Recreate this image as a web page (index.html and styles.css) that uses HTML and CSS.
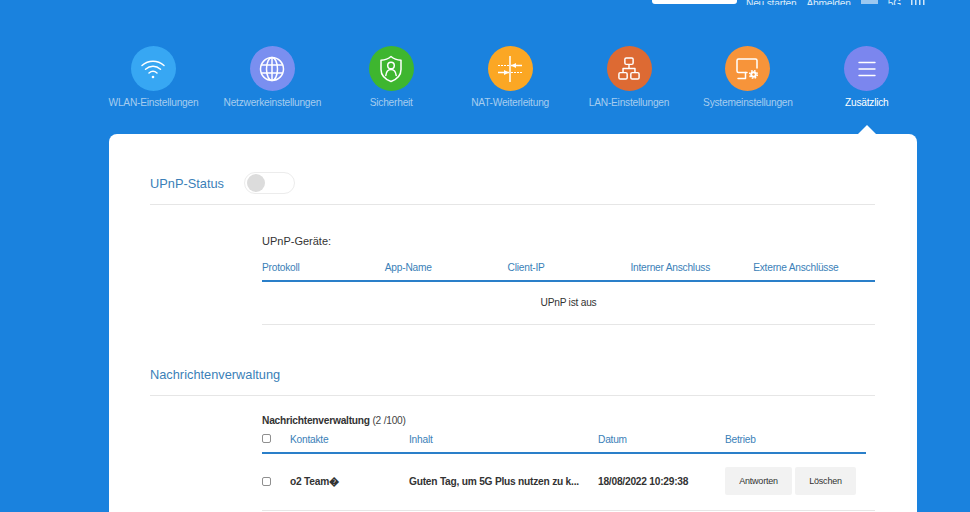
FILE: index.html
```html
<!DOCTYPE html>
<html lang="de">
<head>
    <meta charset="UTF-8">
    <meta name="viewport" content="width=device-width, initial-scale=1.0">
    <title>UPnP</title>
    <link rel="stylesheet" href="styles.css">
</head>
<body>
    <div class="topbar">
        <div class="search"></div>
        <span class="top-link">Neu starten</span>
        <span class="top-link">Abmelden</span>
        <span class="lang"></span>
        <span class="top-link net">5G</span>
        <svg class="signal" width="16" height="5" viewBox="0 0 16 5"><path d="M1 0h1.500v5H1zM5 0h1.500v5H5zM9 0h1.500v5H9zM13 0h1.500v5H13z" fill="#fff"/></svg>
    </div>

    <nav class="nav">
        <div class="nav-item">
            <div class="nav-icon c-wifi">
                <svg width="26" height="26" viewBox="0 0 26 26" fill="none" stroke="#fff" stroke-width="1.500" stroke-linecap="round"><path d="M2 9.500c6.500-5.600 15.500-5.600 22 0"/><path d="M5.500 13.200c4.500-3.800 10.500-3.800 15 0"/><path d="M9 17c2.400-2 5.600-2 8 0"/><circle cx="13" cy="21" r="1.300" fill="#fff" stroke="none"/></svg>
            </div>
            <span>WLAN-Einstellungen</span>
        </div>
        <div class="nav-item">
            <div class="nav-icon c-net">
                <svg width="26" height="26" viewBox="0 0 26 26" fill="none" stroke="#fff" stroke-width="1.500"><circle cx="13" cy="13" r="11.500"/><ellipse cx="13" cy="13" rx="5.500" ry="11.500"/><path d="M13 1.500v23M2.500 9h21M2.500 17h21"/></svg>
            </div>
            <span>Netzwerkeinstellungen</span>
        </div>
        <div class="nav-item">
            <div class="nav-icon c-sec">
                <svg width="26" height="28" viewBox="0 0 26 28" fill="none" stroke="#fff" stroke-width="1.500" stroke-linejoin="round" stroke-linecap="round"><path d="M13 1.500c2.500 2.200 6 3.500 10 3.800v9.200c0 5.500-4.200 9.800-10 12-5.800-2.200-10-6.500-10-12V5.300c4-.3 7.500-1.600 10-3.800z"/><circle cx="13" cy="10.500" r="3.300"/><path d="M7.800 20.500c.4-3.600 2.500-6 5.200-6s4.800 2.400 5.200 6"/></svg>
            </div>
            <span>Sicherheit</span>
        </div>
        <div class="nav-item">
            <div class="nav-icon c-nat">
                <svg width="26" height="28" viewBox="0 0 26 28" fill="none" stroke="#fff"><path d="M13 1v26" stroke-width="1.500"/><path d="M1 10.500h11" stroke-dasharray="2 1" stroke-width="1"/><path d="M14 10.500h11M1 17.500h11" stroke-width="1.500"/><path d="M14 17.500h11" stroke-dasharray="2 1" stroke-width="1"/><path d="M19 8l-5 2.500 5 2.500zM7 15l5 2.500L7 20z" fill="#fff" stroke="none"/></svg>
            </div>
            <span>NAT-Weiterleitung</span>
        </div>
        <div class="nav-item">
            <div class="nav-icon c-lan">
                <svg width="22" height="23" viewBox="0 0 24 25" fill="none" stroke="#fff" stroke-width="1.600" stroke-linejoin="round"><rect x="7.500" y="1" width="9" height="7" rx="1.500"/><rect x="1" y="17" width="9" height="7" rx="1.500"/><rect x="14" y="17" width="9" height="7" rx="1.500"/><path d="M12 8v4.500M5.500 17v-4.500h13V17"/></svg>
            </div>
            <span>LAN-Einstellungen</span>
        </div>
        <div class="nav-item">
            <div class="nav-icon c-sys">
                <svg width="23" height="22" viewBox="0 0 23 22" fill="none" stroke="#fff" stroke-width="1.500" stroke-linejoin="round" stroke-linecap="round"><path d="M11 14.500H2.500a1.500 1.500 0 0 1-1.500-1.500V2.500A1.500 1.500 0 0 1 2.500 1h17A1.500 1.500 0 0 1 21 2.500V10"/><path d="M9.500 14.500V20.500H2"/><circle cx="17.500" cy="16.500" r="3.800" stroke-width="1.600" stroke-dasharray="1.600 1.400" stroke-linecap="butt"/><circle cx="17.500" cy="16.500" r="3.200" fill="#fff" stroke="none"/><circle cx="17.500" cy="16.500" r="1.200" fill="#f7943a" stroke="none"/></svg>
            </div>
            <span>Systemeinstellungen</span>
        </div>
        <div class="nav-item active">
            <div class="nav-icon c-more">
                <svg width="18" height="16" viewBox="0 0 18 16" fill="none" stroke="#fff" stroke-width="1.400" stroke-linecap="round"><path d="M1 1.500h16M1 8h16M1 14.500h16"/></svg>
            </div>
            <span>Zusätzlich</span>
        </div>
    </nav>

    <main class="card">
        <div class="section-head">
            <h2>UPnP-Status</h2>
            <div class="toggle"><div class="knob"></div></div>
        </div>

        <div class="panel upnp">
            <p class="panel-title">UPnP-Geräte:</p>
            <div class="upnp-head">
                <span>Protokoll</span>
                <span>App-Name</span>
                <span>Client-IP</span>
                <span>Interner Anschluss</span>
                <span>Externe Anschlüsse</span>
            </div>
            <div class="upnp-empty">UPnP ist aus</div>
        </div>

        <div class="section-head msg-head">
            <h2>Nachrichtenverwaltung</h2>
        </div>

        <div class="panel msgs">
            <p class="msg-title"><b>Nachrichtenverwaltung</b> (2 /100)</p>
            <div class="msg-row msg-columns">
                <span class="check"></span>
                <span>Kontakte</span>
                <span>Inhalt</span>
                <span>Datum</span>
                <span>Betrieb</span>
            </div>
            <div class="msg-row msg-item">
                <span class="check"></span>
                <span>o2 Team�</span>
                <span>Guten Tag, um 5G Plus nutzen zu k...</span>
                <span>18/08/2022 10:29:38</span>
                <span class="actions">
                    <button>Antworten</button>
                    <button>Löschen</button>
                </span>
            </div>
        </div>
    </main>
</body>
</html>
```

FILE: styles.css
```css
* {
    box-sizing: border-box;
}

html, body {
    height: 512px;
    overflow: hidden;
}

body {
    margin: 0;
    background: #1a82de;
    font-family: "Liberation Sans", Arial, sans-serif;
    color: #333;
}

.topbar {
    height: 5px;
    display: flex;
    align-items: flex-end;
    overflow: hidden;
    padding-left: 652px;
}

.search {
    width: 85px;
    height: 4px;
    margin-bottom: 1px;
    background: #fff;
    border-radius: 0 0 3px 3px;
}

.top-link {
    font-size: 10.2px;
    letter-spacing: -.2px;
    line-height: 12px;
    color: #dcebf9;
    margin-left: 9px;
    margin-bottom: -5px;
    flex: none;
}

.top-link + .top-link {
    margin-left: 10px;
}

.lang {
    width: 17px;
    height: 4px;
    margin-left: 10px;
    margin-bottom: 1px;
    background: #9cc8f0;
}

.top-link.net {
    margin-left: 10px;
}

.signal {
    margin-left: 9px;
    flex: none;
    opacity: .8;
}

.nav {
    display: flex;
    padding: 41px 0 0 94px;
}

.nav-item {
    width: 118.9px;
    flex: none;
    display: flex;
    flex-direction: column;
    align-items: center;
    color: #a6cdef;
    font-size: 10.2px;
    letter-spacing: -.23px;
    line-height: 12px;
    white-space: nowrap;
}

.nav-item.active {
    position: relative;
    color: #fff;
}

.nav-item.active::after {
    content: "";
    position: absolute;
    left: 50%;
    top: 79px;
    margin-left: -9px;
    border: 9px solid transparent;
    border-top: 0;
    border-bottom-color: #fff;
}

.nav-icon {
    width: 45px;
    height: 45px;
    border-radius: 50%;
    margin-bottom: 6px;
    display: flex;
    align-items: center;
    justify-content: center;
}

.c-wifi { background: #37a7f3; }
.c-net { background: #7a8ff0; }
.c-sec { background: #3eb62f; }
.c-nat { background: #fba724; }
.c-lan { background: #dd6a33; }
.c-sys { background: #f7943a; }
.c-more { background: #7b86ee; }

.card {
    margin: 25px 0 0 109px;
    width: 808px;
    height: 378px;
    padding: 0 42px 0 41px;
    background: #fff;
    border-radius: 8px 8px 0 0;
}

.section-head {
    height: 71px;
    display: flex;
    align-items: center;
    padding-top: 27px;
    border-bottom: 1px solid #e6e6e6;
}

.section-head h2 {
    margin: 0;
    font-size: 12.8px;
    font-weight: normal;
    color: #3b7fb8;
    position: relative;
    top: 1px;
}

.toggle {
    width: 51px;
    height: 22px;
    margin-left: 20px;
    padding: 1px 2px;
    border: 1px solid #ececec;
    border-radius: 11px;
}

.knob {
    width: 18px;
    height: 18px;
    border-radius: 50%;
    background: #dcdcdc;
}

.panel {
    margin-left: 112px;
}

.panel-title {
    margin: 30px 0 0;
    font-size: 11px;
    line-height: 13px;
    color: #333;
}

.upnp-head {
    display: grid;
    grid-template-columns: repeat(5, 122.8px);
    height: 31px;
    align-items: center;
    margin-top: 3px;
    padding-top: 4px;
    font-size: 10.2px;
    letter-spacing: -.23px;
    color: #3b7fb8;
    border-bottom: 2px solid #2a7fc9;
    white-space: nowrap;
}

.upnp-empty {
    height: 43px;
    line-height: 41px;
    text-align: center;
    font-size: 10.2px;
    letter-spacing: -.23px;
    border-bottom: 1px solid #e6e6e6;
}

.msg-head {
    height: 71px;
}

.msg-title {
    margin: 18px 0 0;
    font-size: 10.2px;
    letter-spacing: -.23px;
    line-height: 13px;
    color: #444;
}

.msg-title b {
    color: #333;
}

.msg-row {
    display: grid;
    grid-template-columns: 28px 119px 189px 127px 1fr;
    align-items: center;
    font-size: 10.2px;
    letter-spacing: -.23px;
    white-space: nowrap;
}

.msg-columns {
    width: 604px;
    height: 27px;
    color: #3b7fb8;
    border-bottom: 2px solid #2a7fc9;
}

.msg-columns .check {
    margin-bottom: 3px;
}

.msg-item {
    height: 57px;
    padding-bottom: 2px;
    font-weight: bold;
    color: #333;
    border-bottom: 1px solid #e6e6e6;
}

.check {
    width: 9px;
    height: 9px;
    border: 1px solid #8f8f8f;
    border-radius: 2px;
    background: #fff;
}

.actions {
    display: flex;
    gap: 3px;
}

button {
    height: 28px;
    padding: 0;
    border: 0;
    border-radius: 2px;
    background: #f2f2f2;
    font-family: inherit;
    font-size: 9px;
    letter-spacing: -.2px;
    color: #333;
}

button:first-child {
    width: 67px;
}

button:last-child {
    width: 61px;
}
```
